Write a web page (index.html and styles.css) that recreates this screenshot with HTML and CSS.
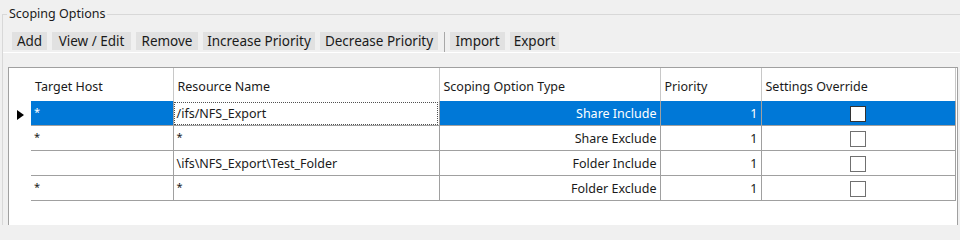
FILE: index.html
```html
<!DOCTYPE html>
<html>
<head>
<meta charset="utf-8">
<link rel="stylesheet" href="styles.css">
</head>
<body>
<fieldset class="group">
  <legend class="group-title">Scoping Options</legend>
  <div class="toolbar">
    <span class="tb-btn w-add">Add</span>
    <span class="tb-btn w-view">View / Edit</span>
    <span class="tb-btn w-remove">Remove</span>
    <span class="tb-btn w-inc">Increase Priority</span>
    <span class="tb-btn w-dec">Decrease Priority</span>
    <span class="tb-sep"></span>
    <span class="tb-btn w-import">Import</span>
    <span class="tb-btn w-export">Export</span>
  </div>
  <div class="grid">
    <table class="table">
      <colgroup>
        <col class="c-rh"><col class="c-host"><col class="c-res"><col class="c-type"><col class="c-pri"><col class="c-ovr">
      </colgroup>
      <thead>
        <tr>
          <th class="rh"></th>
          <th>Target Host</th>
          <th>Resource Name</th>
          <th>Scoping Option Type</th>
          <th>Priority</th>
          <th>Settings Override</th>
        </tr>
      </thead>
      <tbody>
        <tr class="sel">
          <td class="rh"><span class="arrow"></span></td>
          <td class="star">*</td>
          <td class="focus">/ifs/NFS_Export</td>
          <td class="num">Share Include</td>
          <td class="num">1</td>
          <td class="chk"><span class="box"></span></td>
        </tr>
        <tr>
          <td class="rh"></td>
          <td class="star">*</td>
          <td class="star">*</td>
          <td class="num">Share Exclude</td>
          <td class="num">1</td>
          <td class="chk"><span class="box"></span></td>
        </tr>
        <tr>
          <td class="rh"></td>
          <td></td>
          <td>\ifs\NFS_Export\Test_Folder</td>
          <td class="num">Folder Include</td>
          <td class="num">1</td>
          <td class="chk"><span class="box"></span></td>
        </tr>
        <tr>
          <td class="rh"></td>
          <td class="star">*</td>
          <td class="star">*</td>
          <td class="num">Folder Exclude</td>
          <td class="num">1</td>
          <td class="chk"><span class="box"></span></td>
        </tr>
      </tbody>
    </table>
  </div>
</fieldset>
</body>
</html>
```

FILE: styles.css
```css
html, body {
  margin: 0;
  padding: 0;
  background: #f0f0f0;
  height: 225px;
  overflow: hidden;
}
body {
  font-family: "Noto Sans", "Open Sans", sans-serif;
  font-size: 12.5px;
  color: #1a1a1a;
}
.group {
  margin: 4px 0 0 2px;
  padding: 0;
  border: 1px solid #d8d8d8;
  border-right: 0;
  border-bottom: 0;
  min-width: 0;
}
.group-title {
  margin-left: 4px;
  padding: 0 2px;
  line-height: 20px;
  font-size: 12.5px;
}
.toolbar {
  display: flex;
  align-items: flex-start;
  gap: 5px;
  margin-top: 8px;
  padding-left: 9px;
  height: 20px;
  border-bottom: 1px solid #ffffff;
  font-size: 13.5px;
}
.tb-btn {
  height: 18px;
  line-height: 19px;
  padding: 0;
  text-align: center;
  background: #e1e1e1;
  color: #1a1a1a;
  white-space: nowrap;
}
.w-add { width: 35px; }
.w-view { width: 79px; }
.w-remove { width: 62px; }
.w-inc { width: 112px; }
.w-dec { width: 118px; }
.w-import { width: 55px; }
.w-export { width: 49px; }
.tb-sep {
  width: 1px;
  height: 20px;
  background: #a8a8a8;
  margin: 0 0 0 1px;
}
.grid {
  margin: 14px 2px 0 5px;
  border: 1px solid #a0a0a0;
  border-bottom: 0;
  background: #ffffff;
  height: 157px;
}
.table {
  border-collapse: collapse;
  table-layout: fixed;
  width: 946px;
}
.c-rh { width: 22px; }
.c-host { width: 142px; }
.c-res { width: 266px; }
.c-type { width: 221px; }
.c-pri { width: 101px; }
.c-ovr { width: 194px; }
th {
  height: 30px;
  padding: 3px 0 0 4px;
  text-align: left;
  font-weight: normal;
  border-right: 1px solid #c8c8c8;
  white-space: nowrap;
}
th.rh, td.rh {
  border-right: 0;
  border-bottom: 0;
  padding: 0;
}
td {
  height: 24px;
  padding: 0 3px;
  border-right: 1px solid #a0a0a0;
  border-bottom: 1px solid #a0a0a0;
  white-space: nowrap;
  vertical-align: middle;
}
td.num { text-align: right; }
td.star { vertical-align: top; padding-top: 3px; height: 21px; font-size: 11px; }
td.chk { text-align: center; }
tr.sel td:not(.rh):not(.focus) {
  background: #0078d7;
  color: #ffffff;
}
td.focus {
  outline: 1px dotted #505050;
  outline-offset: -2px;
  background: #ffffff;
}
.arrow {
  display: block;
  width: 0;
  height: 0;
  margin: 4px 0 0 8px;
  border-top: 5.5px solid transparent;
  border-bottom: 5.5px solid transparent;
  border-left: 7px solid #000000;
}
.box {
  display: inline-block;
  width: 14px;
  height: 14px;
  border: 1px solid #707070;
  background: #ffffff;
  vertical-align: middle;
}
tr.sel .box { border-color: #333333; }
```
